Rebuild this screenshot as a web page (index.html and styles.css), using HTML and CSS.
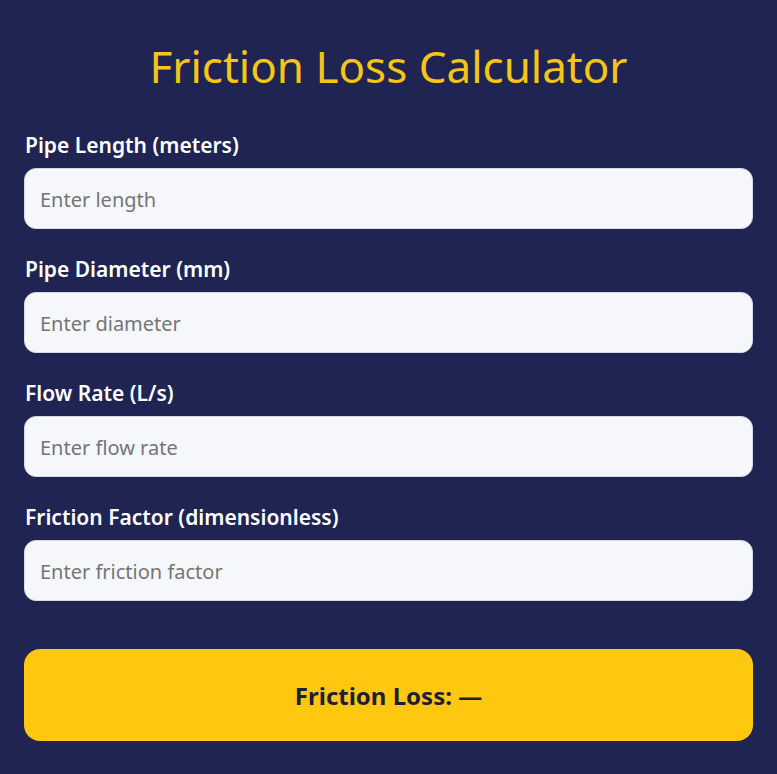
FILE: index.html
```html
<!DOCTYPE html>
<html lang="en">
<head>
<meta charset="utf-8">
<title>Friction Loss Calculator</title>
<link rel="stylesheet" href="styles.css">
</head>
<body>
<div class="calc">
  <h1 class="title">Friction Loss Calculator</h1>
  <div class="field">
    <label class="label" for="len">Pipe Length (meters)</label>
    <input class="input" id="len" type="text" placeholder="Enter length">
  </div>
  <div class="field">
    <label class="label" for="dia">Pipe Diameter (mm)</label>
    <input class="input" id="dia" type="text" placeholder="Enter diameter">
  </div>
  <div class="field">
    <label class="label" for="flow">Flow Rate (L/s)</label>
    <input class="input" id="flow" type="text" placeholder="Enter flow rate">
  </div>
  <div class="field">
    <label class="label" for="ff">Friction Factor (dimensionless)</label>
    <input class="input" id="ff" type="text" placeholder="Enter friction factor">
  </div>
  <div class="result">Friction Loss: —</div>
</div>
</body>
</html>
```
FILE: styles.css
```css
html, body {
  margin: 0;
  padding: 0;
  background: #1f2452;
}
body {
  font-family: "Noto Sans", "Open Sans", sans-serif;
  height: 774px;
}
.calc {
  padding: 40px 24px 0;
  display: flex;
  flex-direction: column;
}
.title {
  margin: 0 0 39px;
  font-size: 44px;
  font-weight: 400;
  line-height: 53px;
  text-align: center;
  color: #f5c518;
}
.field {
  display: flex;
  flex-direction: column;
  gap: 12px;
  margin-bottom: 27px;
}
.label {
  font-size: 21px;
  line-height: 24px;
  font-weight: 600;
  color: #ffffff;
  padding-left: 1px;
  position: relative;
  top: 1px;
}
.input {
  box-sizing: border-box;
  height: 61px;
  width: 100%;
  margin: 0;
  padding: 2px 15px 0;
  font-family: inherit;
  font-size: 20px;
  color: #333;
  background: #f5f7fa;
  border: 1px solid #d6dae2;
  border-radius: 12px;
  outline: none;
}
.input::placeholder {
  color: #757575;
}
.result {
  margin-top: 21px;
  height: 92px;
  display: flex;
  align-items: center;
  justify-content: center;
  background: #fdc80f;
  border-radius: 16px;
  font-size: 24px;
  font-weight: 700;
  color: #1c1f36;
}
```
